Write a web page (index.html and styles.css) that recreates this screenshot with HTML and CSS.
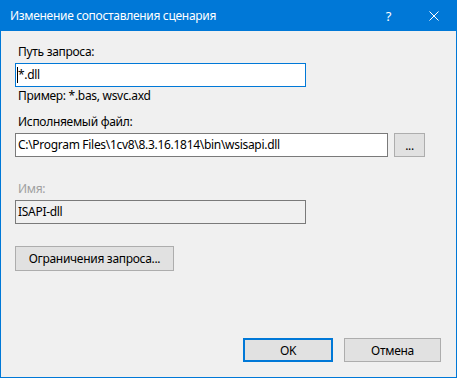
FILE: index.html
```html
<!DOCTYPE html>
<html lang="ru">
<head>
    <meta charset="UTF-8">
    <title>Изменение сопоставления сценария</title>
    <link rel="stylesheet" href="styles.css">
</head>
<body>
    <div class="dialog">
        <div class="titlebar">
            <span class="title">Изменение сопоставления сценария</span>
            <button class="caption-btn">?</button>
            <button class="caption-btn">
                <svg width="10" height="10" viewBox="0 0 10 10">
                    <path d="M0.5 0.5 L9.5 9.5 M9.5 0.5 L0.5 9.5" stroke="#fff" stroke-width="1" fill="none"/>
                </svg>
            </button>
        </div>

        <div class="content">
            <!-- Путь запроса -->
            <label class="field-label">Путь запроса:</label>
            <div class="textbox focused short"><span class="caret"></span>*.dll</div>
            <div class="hint">Пример: *.bas, wsvc.axd</div>

            <!-- Исполняемый файл -->
            <label class="field-label spaced">Исполняемый файл:</label>
            <div class="row">
                <div class="textbox long">C:\Program Files\1cv8\8.3.16.1814\bin\wsisapi.dll</div>
                <button class="btn browse">...</button>
            </div>

            <!-- Имя -->
            <label class="field-label disabled name-label">Имя:</label>
            <div class="textbox readonly short">ISAPI-dll</div>

            <button class="btn limits">Ограничения запроса...</button>

            <div class="footer">
                <button class="btn default">OK</button>
                <button class="btn cancel">Отмена</button>
            </div>
        </div>
    </div>
</body>
</html>
```

FILE: styles.css
```css
:root {
    --accent: #0078d7;
    --window-bg: #f0f0f0;
    --field-border: #7a7a7a;
    --btn-bg: #e1e1e1;
    --btn-border: #adadad;
}

* {
    box-sizing: border-box;
    margin: 0;
    padding: 0;
    font-family: 'Noto Sans', 'Liberation Sans', sans-serif;
    font-size: 12px;
    letter-spacing: -0.3px;
}

body {
    background: var(--window-bg);
}

.dialog {
    width: 457px;
    height: 378px;
    border: 1px solid var(--accent);
    border-top: none;
    background: var(--window-bg);
    display: flex;
    flex-direction: column;
}

.titlebar {
    height: 31px;
    background: var(--accent);
    display: flex;
    align-items: center;
    color: white;
}

.title {
    flex: 1;
    padding-left: 9px;
    color: white;
}

.caption-btn {
    width: 45px;
    height: 31px;
    border: none;
    background: transparent;
    color: white;
    display: flex;
    align-items: center;
    justify-content: center;
}

.caption-btn:first-of-type {
    font-size: 13px;
}

.content {
    flex: 1;
    display: flex;
    flex-direction: column;
    align-items: flex-start;
    padding: 13px 15px 15px 14px;
}

.field-label {
    display: block;
    line-height: 15px;
    padding-left: 3px;
    margin-bottom: 4px;
    color: #000;
}

.field-label.spaced {
    margin-top: 11px;
}

.field-label.disabled {
    color: #a0a0a0;
}

.name-label {
    margin-top: 24px;
}

.hint {
    line-height: 15px;
    padding-left: 3px;
    margin-top: 1px;
    color: #000;
}

.textbox {
    height: 24px;
    border: 1px solid var(--field-border);
    background: white;
    padding-left: 2px;
    line-height: 22px;
    white-space: nowrap;
    position: relative;
}

.textbox.short {
    width: 291px;
}

.textbox.long {
    width: 373px;
}

.textbox.focused {
    border-color: var(--accent);
}

.textbox.readonly {
    background: var(--window-bg);
}

.caret {
    position: absolute;
    left: 1px;
    top: 3px;
    width: 1px;
    height: 16px;
    background: #000;
}

.row {
    display: flex;
    gap: 6px;
}

.btn {
    height: 24px;
    background: var(--btn-bg);
    border: 1px solid var(--btn-border);
    color: #000;
}

.browse {
    width: 31px;
}

.limits {
    width: 159px;
    height: 25px;
    margin-top: 22px;
}

.footer {
    margin-top: auto;
    align-self: stretch;
    display: flex;
    justify-content: flex-end;
    gap: 11px;
}

.default {
    width: 90px;
    border: 2px solid var(--accent);
}

.cancel {
    width: 97px;
}
```
